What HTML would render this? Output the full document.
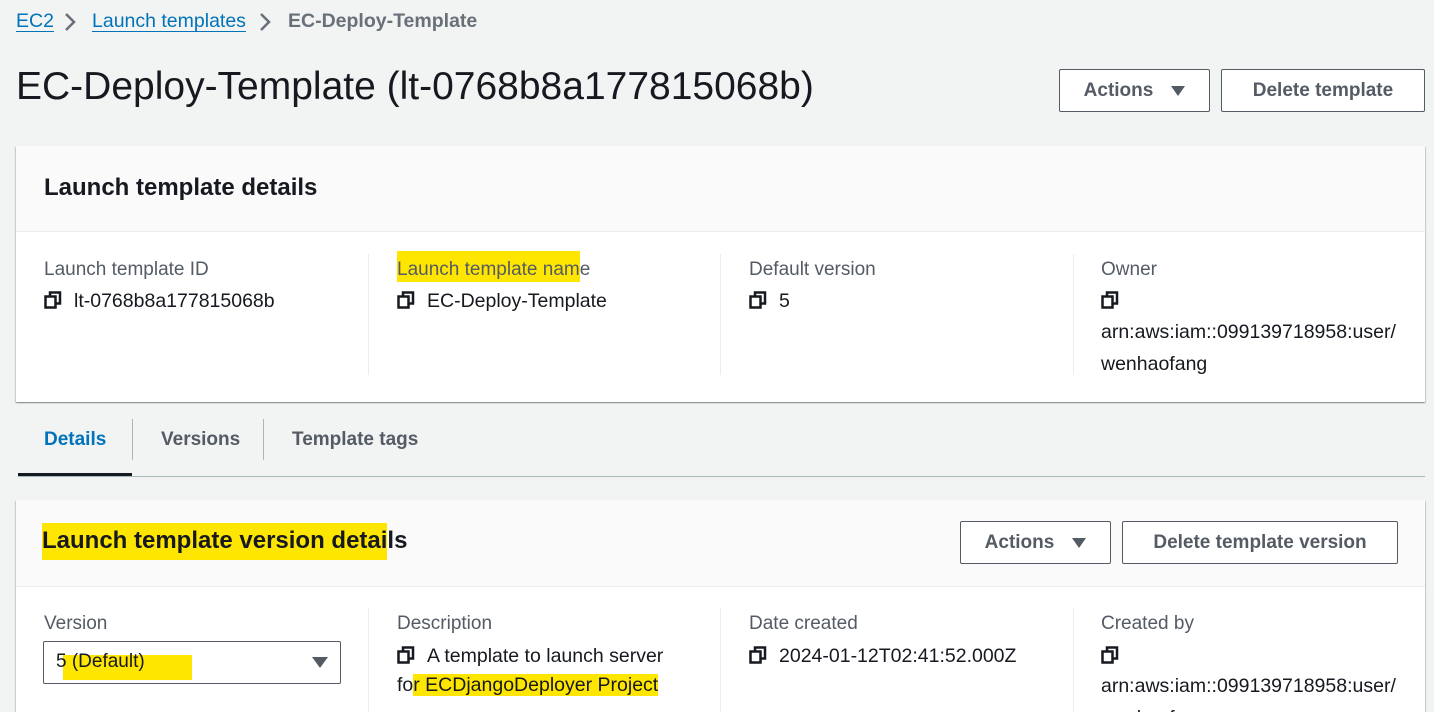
<!DOCTYPE html>
<html><head><meta charset="utf-8"><style>
*{margin:0;padding:0;box-sizing:border-box}
html,body{width:1434px;height:712px;overflow:hidden}
body{background:#f2f3f3;font-family:"Liberation Sans",sans-serif;color:#16191f;position:relative}
.a{position:absolute;white-space:nowrap}
.lnk{color:#0073bb;text-decoration:underline;text-underline-offset:4px;text-decoration-thickness:1px}
.btn{position:absolute;border:1px solid #545b64;border-radius:2px;background:#fff;color:#545b64;font-weight:bold;font-size:19px;display:flex;align-items:center;justify-content:center}
.tri{display:inline-block;width:0;height:0;border-left:7px solid transparent;border-right:7px solid transparent;border-top:10px solid #545b64;margin-left:18px}
.card{position:absolute;background:#fff;box-shadow:0 1px 1px rgba(0,28,36,.3),1px 1px 1px rgba(0,28,36,.15),-1px 1px 1px rgba(0,28,36,.15)}
.hdr{position:absolute;left:0;right:0;top:0;background:#fafafa;border-bottom:1px solid #eaeded}
.lab{position:absolute;font-size:19px;color:#545b64;white-space:nowrap}
.val{position:absolute;font-size:19.5px;color:#16191f;line-height:32px;white-space:nowrap}
.div{position:absolute;width:1px;background:#eaeded}
.hl{background:#ffe600}
svg.c{vertical-align:-2px;margin-right:12px}
</style></head><body>
<div class="a" style="left:16px;top:10px;font-size:19.5px"><span class="lnk">EC2</span></div>
<svg class="a" style="left:63px;top:12px" width="14" height="20"><path d="M3 2 L11 10 L3 18" stroke="#687078" stroke-width="2.5" fill="none"/></svg>
<div class="a" style="left:92px;top:10px;font-size:19.5px"><span class="lnk">Launch templates</span></div>
<svg class="a" style="left:258px;top:12px" width="14" height="20"><path d="M3 2 L11 10 L3 18" stroke="#687078" stroke-width="2.5" fill="none"/></svg>
<div class="a" style="left:288px;top:10px;font-size:19.5px;font-weight:bold;color:#687078">EC-Deploy-Template</div>
<div class="a" style="left:16px;top:65px;font-size:39px;color:#16191f">EC-Deploy-Template (lt-0768b8a177815068b)</div>
<div class="btn" style="left:1059px;top:69px;width:151px;height:43px">Actions<span class="tri"></span></div>
<div class="btn" style="left:1221px;top:69px;width:204px;height:43px">Delete template</div>

<div class="card" style="left:16px;top:146px;width:1409px;height:256px">
 <div class="hdr" style="height:86px"></div>
 <div class="a" style="left:28px;top:28px;font-size:24px;font-weight:bold">Launch template details</div>
 <div class="div" style="left:352px;top:108px;height:121px"></div>
 <div class="div" style="left:704px;top:108px;height:121px"></div>
 <div class="div" style="left:1057px;top:108px;height:121px"></div>
</div>
<svg width="0" height="0" style="position:absolute"><defs><g id="cp"><rect x="6" y="1.5" width="10" height="11" fill="none" stroke="#16191f" stroke-width="2.5"/><rect x="1.5" y="5.5" width="10" height="11" fill="#fff" stroke="#16191f" stroke-width="2.5"/></g></defs></svg>
<div class="lab" style="left:44px;top:259px">Launch template ID</div>
<div class="val" style="left:44px;top:285px"><svg class="c" width="18" height="18"><use href="#cp"/></svg>lt-0768b8a177815068b</div>
<div class="lab" style="left:397px;top:259px"><span class="hl" style="padding:8px 0 2px">Launch template nam</span>e</div>
<div class="val" style="left:397px;top:285px"><svg class="c" width="18" height="18"><use href="#cp"/></svg>EC-Deploy-Template</div>
<div class="lab" style="left:749px;top:259px">Default version</div>
<div class="val" style="left:749px;top:285px"><svg class="c" width="18" height="18"><use href="#cp"/></svg>5</div>
<div class="lab" style="left:1101px;top:259px">Owner</div>
<div class="val" style="left:1101px;top:285px"><svg class="c" width="18" height="18"><use href="#cp"/></svg></div>
<div class="val" style="left:1101px;top:316px">arn:aws:iam::099139718958:user/<br>wenhaofang</div>

<div class="a" style="left:44px;top:429px;font-size:19px;font-weight:bold;color:#0073bb">Details</div>
<div class="a" style="left:18px;top:473px;width:114px;height:4px;background:#16191f"></div>
<div class="a" style="left:132px;top:419px;width:1px;height:41px;background:#aab7b8"></div>
<div class="a" style="left:161px;top:429px;font-size:19px;font-weight:bold;color:#545b64">Versions</div>
<div class="a" style="left:263px;top:419px;width:1px;height:41px;background:#aab7b8"></div>
<div class="a" style="left:292px;top:429px;font-size:19px;font-weight:bold;color:#545b64">Template tags</div>
<div class="a" style="left:18px;top:476px;width:1407px;height:1px;background:#aab7b8"></div>

<div class="card" style="left:16px;top:500px;width:1409px;height:230px">
 <div class="hdr" style="height:87px"></div>
 <div class="a" style="left:26px;top:27px;font-size:24px;font-weight:bold"><span class="hl" style="padding:4px 0 6px">Launch template version detai</span>ls</div>
 <div class="div" style="left:352px;top:108px;height:130px"></div>
 <div class="div" style="left:704px;top:108px;height:130px"></div>
 <div class="div" style="left:1057px;top:108px;height:130px"></div>
</div>
<div class="btn" style="left:960px;top:521px;width:151px;height:43px">Actions<span class="tri"></span></div>
<div class="btn" style="left:1122px;top:521px;width:276px;height:43px">Delete template version</div>
<div class="lab" style="left:44px;top:613px">Version</div>
<div class="a" style="left:43px;top:641px;width:298px;height:43px;border:1px solid #545b64;border-radius:2px;background:#fff"></div>
<div class="a" style="left:63px;top:655px;width:129px;height:25px;background:#ffe600"></div>
<div class="a" style="left:56px;top:651px;font-size:19px">5 (Default)</div>
<div class="a" style="left:312px;top:657px;width:0;height:0;border-left:8px solid transparent;border-right:8px solid transparent;border-top:11px solid #545b64"></div>
<div class="lab" style="left:397px;top:613px">Description</div>
<div class="val" style="left:397px;top:640px"><svg class="c" width="18" height="18"><use href="#cp"/></svg>A template to launch server</div>
<div class="val" style="left:397px;top:669px">fo<span class="hl">r ECDjangoDeployer Project</span></div>
<div class="lab" style="left:749px;top:613px">Date created</div>
<div class="val" style="left:749px;top:640px"><svg class="c" width="18" height="18"><use href="#cp"/></svg>2024-01-12T02:41:52.000Z</div>
<div class="lab" style="left:1101px;top:613px">Created by</div>
<div class="val" style="left:1101px;top:640px"><svg class="c" width="18" height="18"><use href="#cp"/></svg></div>
<div class="val" style="left:1101px;top:670px">arn:aws:iam::099139718958:user/<br>wenhaofang</div>
</body></html>
